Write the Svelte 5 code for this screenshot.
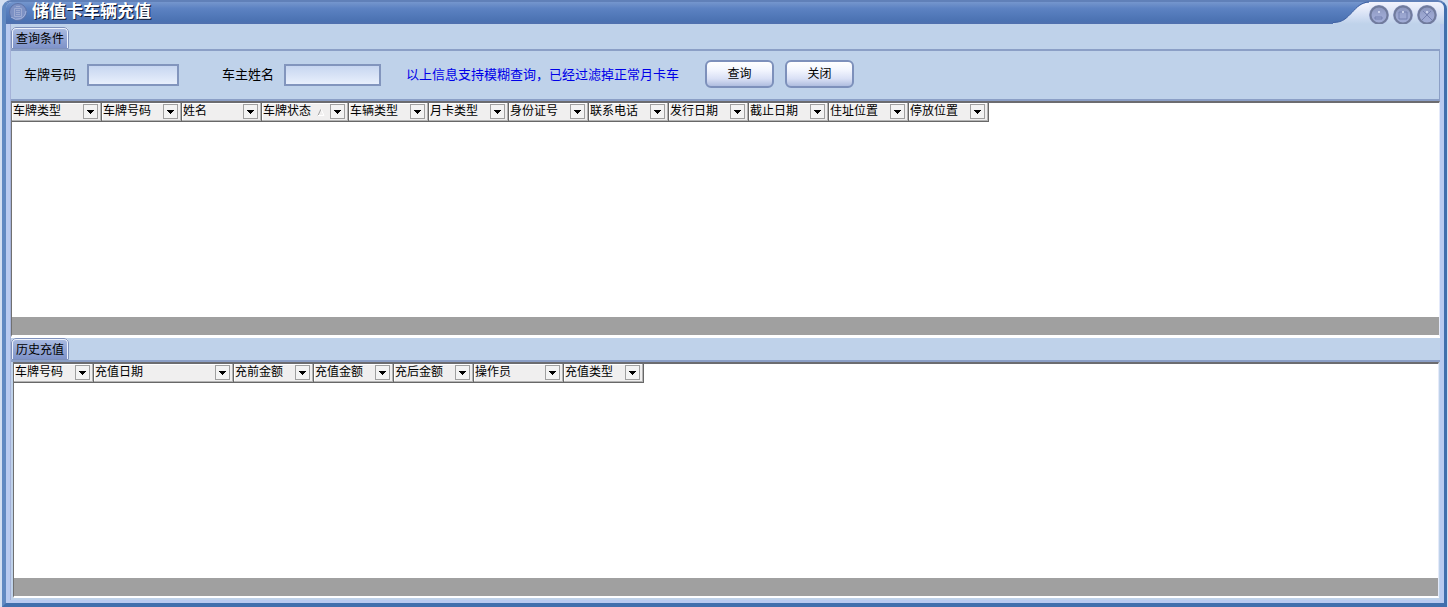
<script lang="ts">
    let plate = $state("");
    let owner = $state("");

    const cards = [
        { name: "车牌类型", width: 90 },
        { name: "车牌号码", width: 80 },
        { name: "姓名", width: 80 },
        { name: "车牌状态", width: 87, sorted: true },
        { name: "车辆类型", width: 80 },
        { name: "月卡类型", width: 80 },
        { name: "身份证号", width: 80 },
        { name: "联系电话", width: 80 },
        { name: "发行日期", width: 80 },
        { name: "截止日期", width: 80 },
        { name: "住址位置", width: 80 },
        { name: "停放位置", width: 80 },
    ];
    const history = [
        { name: "车牌号码", width: 80 },
        { name: "充值日期", width: 140 },
        { name: "充前金额", width: 80 },
        { name: "充值金额", width: 80 },
        { name: "充后金额", width: 80 },
        { name: "操作员", width: 90 },
        { name: "充值类型", width: 80 },
    ];
</script>

{#snippet grid(columns, label)}
    <div class="grid">
        <table aria-label={label}>
            <thead>
                <tr>
                    {#each columns as col}
                        <th style="width:{col.width}px">
                            <div class="cell">
                                <span>{col.name}</span>
                                {#if col.sorted}
                                    <svg class="sort" width="8" height="8" viewBox="0 0 8 8"><path d="M1 7.5L4 1" stroke="#a0a0a0" fill="none" /><path d="M4 1L7 7.5H1" stroke="#fff" fill="none" /></svg>
                                {/if}
                                <button class="filter" aria-label="筛选{col.name}">
                                    <svg width="7" height="4" viewBox="0 0 7 4"><path d="M0 0H7V1H6V2H5V3H4V4H3V3H2V2H1V1H0Z" fill="#000" /></svg>
                                </button>
                            </div>
                        </th>
                    {/each}
                </tr>
            </thead>
        </table>
        <div class="footer"></div>
    </div>
{/snippet}

<div class="window">
    <header>
        <svg class="logo" width="20" height="20" viewBox="0 0 20 20">
            <circle cx="10" cy="10" r="8.5" fill="#7d91c4" stroke="#5d73a8" />
            <path d="M3 15A9 9 0 0 0 18 9" fill="none" stroke="#a3b5df" />
            <path d="M6.500 6.500H13.500V14.500H6.500ZM8 8.500H12M8 10.500H12M8 12.500H12M8 4.500H12" fill="none" stroke="#9dabd3" />
        </svg>
        <h1>储值卡车辆充值</h1>
        <svg class="curve" width="36" height="24" viewBox="0 0 36 24">
            <defs>
                <linearGradient id="cap" x1="0" y1="0" x2="0" y2="1">
                    <stop offset="0.1" stop-color="#f2f3fd" />
                    <stop offset="0.6" stop-color="#d5e0f4" />
                    <stop offset="1" stop-color="#bfd2ea" />
                </linearGradient>
            </defs>
            <path d="M0 24V22.500C11 22.500 14 17 19 12.500C24 7 28 3 36 2.500V24Z" fill="url(#cap)" />
            <path d="M0 22.500C11 22.500 14 17 19 12.500C24 7 28 2.500 36 2" fill="none" stroke="#3c5ea0" />
        </svg>
        <div class="controls">
            <button aria-label="最小化">
                <svg viewBox="0 0 20 20"><circle cx="10" cy="10" r="8.5" /><path d="M6 14H13V12H6Z" /><circle class="shine" cx="10" cy="7" r="1" /></svg>
            </button>
            <button aria-label="最大化">
                <svg viewBox="0 0 20 20"><circle cx="10" cy="10" r="8.5" /><path d="M6 7H14V14H6Z" /><circle class="shine" cx="10" cy="7" r="1" /></svg>
            </button>
            <button aria-label="关闭窗口">
                <svg viewBox="0 0 20 20"><circle cx="10" cy="10" r="8.5" /><path d="M5 15L14 6M6 6L15 15" /><circle class="shine" cx="10" cy="7" r="1" /></svg>
            </button>
        </div>
    </header>

    <main>
        <div class="tabs"><button class="tab">查询条件</button></div>
        <form class="query" onsubmit={(e) => e.preventDefault()}>
            <label for="plate">车牌号码</label>
            <input id="plate" class="plate" bind:value={plate}>
            <label for="owner">车主姓名</label>
            <input id="owner" class="owner" bind:value={owner}>
            <p>以上信息支持模糊查询，已经过滤掉正常月卡车</p>
            <button type="submit">查询</button>
            <button type="button">关闭</button>
        </form>
        {@render grid(cards, "查询结果")}

        <div class="tabs second"><button class="tab">历史充值</button></div>
        <section class="history">
            {@render grid(history, "历史充值")}
        </section>
    </main>
</div>

<style>
    :global(body) {
        margin: 0;
        background: #d3dff2;
    }
    .window {
        box-sizing: border-box;
        min-height: 100vh;
        display: flex;
        flex-direction: column;
        margin: 0 1px 0 2px;
        border: 4px solid #4c78b4;
        border-color: #6080b8 #416fad #416fad #6189c2;
        border-width: 2px 3px 4px 4px;
        border-radius: 9px 9px 0 0;
        background: #b9caf0;
        color: #000;
        font: 12px/16px "Liberation Sans", "Noto Sans CJK SC", sans-serif;
    }
    button, input {
        font: inherit;
        color: inherit;
        padding: 0;
        margin: 0;
        box-sizing: border-box;
    }
    header {
        display: flex;
        height: 22px;
        background: linear-gradient(#7596cd, #5c82c2 30%, #4b72b2 85%, #5070ae);
        border-radius: 6px 6px 0 0;
    }
    .logo {
        margin-left: 2px;
    }
    h1 {
        flex: 1;
        margin: 0 0 0 4px;
        font-size: 17px;
        line-height: 20px;
        color: #fff;
        text-shadow: 1px 1px 0 #101830;
    }
    .curve {
        margin-top: -2px;
        flex: none;
    }
    .controls {
        display: flex;
        gap: 4px;
        padding: 3px 7px 0 0;
        background: linear-gradient(#f2f3fd, #d5e0f4 60%, #bfd2ea);
        border-radius: 0 6px 0 0;
        & button {
            width: 20px;
            height: 20px;
            border: 0;
            border-radius: 50%;
            background: linear-gradient(#8792b8, #9ba6d0 50%, #a3aed8);
        }
        & svg {
            display: block;
            fill: none;
            stroke: #7581b0;
        }
        & circle {
            stroke: #707b9c;
            stroke-width: 2;
        }
        & .shine {
            fill: #dfe5f8;
            stroke: none;
        }
    }
    main {
        flex: 1;
        display: flex;
        flex-direction: column;
        margin: 0 4px 3px 4px;
        border-left: 1px solid #a5b2d8;
        background: #bfd2ea;
    }
    .tabs {
        display: flex;
        align-items: flex-end;
        height: 25px;
        border-bottom: 2px solid #8b9fc6;
    }
    .second {
        height: 22px;
        border-top: 1px solid #fff;
    }
    .tab {
        width: 58px;
        height: 22px;
        border: 2px solid #edf2fc;
        border-bottom: 0;
        border-radius: 5px 5px 0 0;
        outline: 1px solid #7e91bc;
        outline-offset: -1px;
        background: linear-gradient(#a8b9df, #7d91c8);
        white-space: nowrap;
        line-height: 18px;
    }
    .query {
        display: flex;
        align-items: center;
        height: 48px;
        padding-left: 13px;
        border-right: 1px solid #8b9fc6;
        border-bottom: 2px solid #8b9fc6;
        font-size: 13px;
        & label, & p {
            white-space: nowrap;
        }
        & p {
            margin: 0 26px 0 25px;
            color: #0000e8;
        }
        & input {
            height: 22px;
            border: 2px solid #8295bd;
            background: linear-gradient(#c7d6f0, #e8effc);
        }
        & button {
            width: 69px;
            height: 28px;
            margin: 0 11px 2px 0;
            border: 2px solid #7d90bb;
            border-radius: 6px;
            background: linear-gradient(#fff, #f2f5fe 35%, #d9e0f5 70%, #b0bddf);
            font-size: 12px;
        }
    }
    .plate {
        width: 92px;
        margin: 0 43px 0 11px;
    }
    .owner {
        width: 97px;
        margin-left: 10px;
    }
    .grid {
        flex: 1;
        display: flex;
        flex-direction: column;
        align-items: flex-start;
        border-top: 2px solid #6c6c70;
        border-left: 1px solid #707070;
        border-right: 1px solid #e4eafa;
        border-bottom: 2px solid #fff;
        background: #fff;
    }
    .history {
        flex: 1;
        display: flex;
        padding: 0 1px 0 2px;
        & .grid {
            margin-bottom: 2px;
        }
    }
    table {
        table-layout: fixed;
        width: 0;
        border-collapse: separate;
        border-spacing: 0;
    }
    th {
        box-sizing: border-box;
        padding: 0;
        border: 1px solid #686868;
        border-width: 0 1px 1px 0;
        box-shadow: inset -1px -1px #b4b4b4, inset 1px 1px #fff;
        background: #f0efef;
        font-weight: normal;
    }
    .cell {
        display: flex;
        align-items: center;
        padding: 1px 3px 2px 1px;
        line-height: 15px;
        white-space: nowrap;
    }
    .sort {
        margin-left: 6px;
    }
    .filter {
        width: 15px;
        height: 15px;
        margin-left: auto;
        display: flex;
        align-items: center;
        justify-content: center;
        border: 1px solid #a0a0a0;
        background: #f3f3f3;
    }
    .footer {
        align-self: stretch;
        height: 18px;
        margin-top: auto;
        background: #a0a0a0;
    }
</style>
